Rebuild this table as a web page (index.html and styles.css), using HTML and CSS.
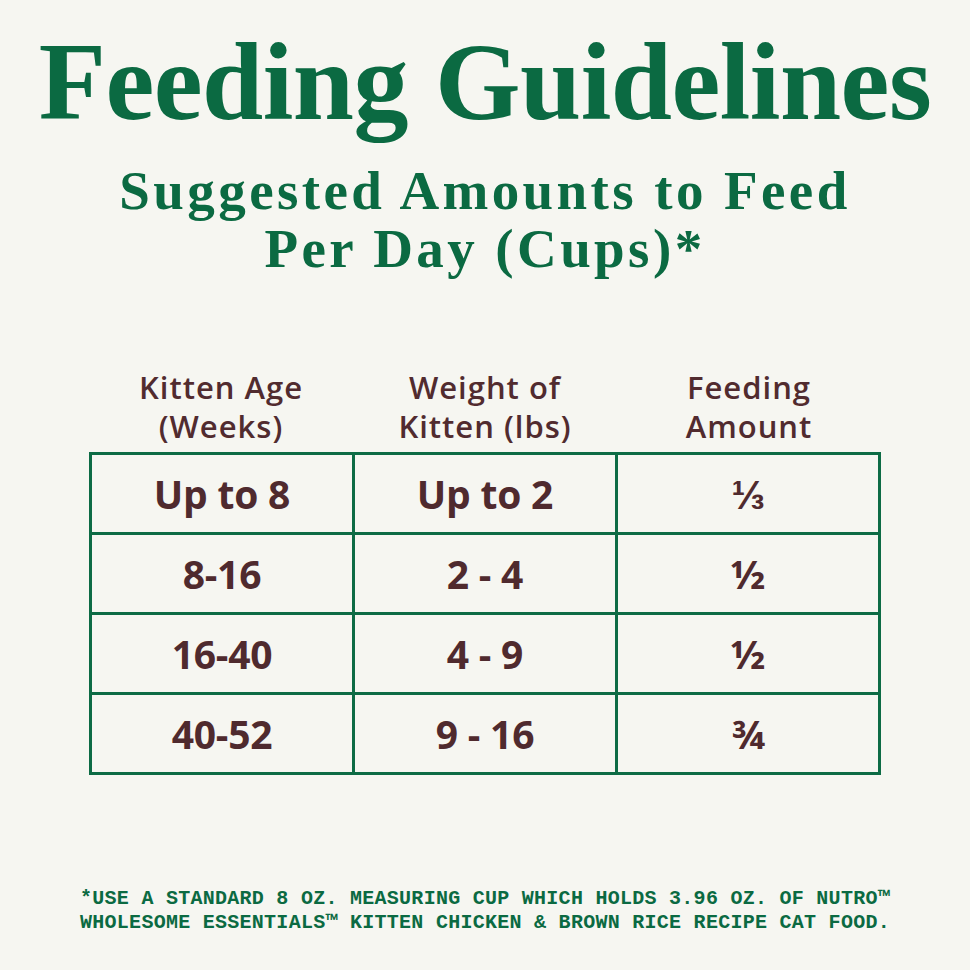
FILE: index.html
```html
<!DOCTYPE html>
<html>
<head>
<meta charset="utf-8">
<link rel="stylesheet" href="styles.css">
</head>
<body>
<main class="page">
  <h1 class="title">Feeding Guidelines</h1>
  <h2 class="subtitle"><span class="sub-line">Suggested Amounts to Feed</span><span class="sub-line">Per Day (Cups)*</span></h2>
  <div class="table-wrap">
    <div class="head-row">
      <div class="head-cell">Kitten Age<br>(Weeks)</div>
      <div class="head-cell">Weight of<br>Kitten (lbs)</div>
      <div class="head-cell">Feeding<br>Amount</div>
    </div>
    <table class="grid">
      <tr><td>Up to 8</td><td>Up to 2</td><td class="frac">⅓</td></tr>
      <tr><td>8-16</td><td>2 - 4</td><td class="frac">½</td></tr>
      <tr><td>16-40</td><td>4 - 9</td><td class="frac">½</td></tr>
      <tr><td>40-52</td><td>9 - 16</td><td class="frac">¾</td></tr>
    </table>
  </div>
  <p class="note">*USE A STANDARD 8 OZ. MEASURING CUP WHICH HOLDS 3.96 OZ. OF NUTRO™<br>WHOLESOME ESSENTIALS™ KITTEN CHICKEN &amp; BROWN RICE RECIPE CAT FOOD.</p>
</main>
</body>
</html>
```

FILE: styles.css
```css
html, body {
  margin: 0;
  padding: 0;
  background: #f6f6f1;
}
.page {
  width: 970px;
  height: 970px;
  display: flex;
  flex-direction: column;
  align-items: center;
  overflow: hidden;
}
.title {
  margin: 22px 0 0;
  font-family: "Liberation Serif", serif;
  font-weight: 700;
  font-size: 110px;
  line-height: 120px;
  color: #0b6a42;
  white-space: nowrap;
  letter-spacing: -0.5px;
}
.subtitle {
  margin: 20px 0 0;
  display: flex;
  flex-direction: column;
  align-items: center;
  font-family: "Liberation Serif", serif;
  font-weight: 700;
  font-size: 55px;
  line-height: 58px;
  color: #0b6a42;
  white-space: nowrap;
  letter-spacing: 3.4px;
}
.sub-line {
  display: block;
  height: 58px;
}
.table-wrap {
  margin-top: 90px;
  width: 792px;
}
.head-row {
  display: grid;
  grid-template-columns: 1fr 1fr 1fr;
  padding-bottom: 6px;
}
.head-cell {
  font-family: "Open Sans", sans-serif;
  font-weight: 600;
  font-size: 31px;
  line-height: 39px;
  color: #512b2f;
  text-align: center;
  letter-spacing: 1px;
}
.grid {
  width: 792px;
  border-collapse: collapse;
  table-layout: fixed;
  border: 3px solid #0d6b45;
}
.grid td {
  border: 3px solid #0d6b45;
  height: 77px;
  padding: 0;
  text-align: center;
  vertical-align: middle;
  font-family: "Open Sans", sans-serif;
  font-weight: 700;
  font-size: 39px;
  color: #4f2a2e;
  letter-spacing: -0.2px;
}
.grid td.frac {
  font-size: 40px;
}
.note {
  margin: 112px 0 0;
  font-family: "Liberation Mono", monospace;
  font-weight: 700;
  font-size: 20px;
  line-height: 24px;
  color: #0b6a42;
  text-align: center;
  white-space: nowrap;
  letter-spacing: 0.27px;
}
```
